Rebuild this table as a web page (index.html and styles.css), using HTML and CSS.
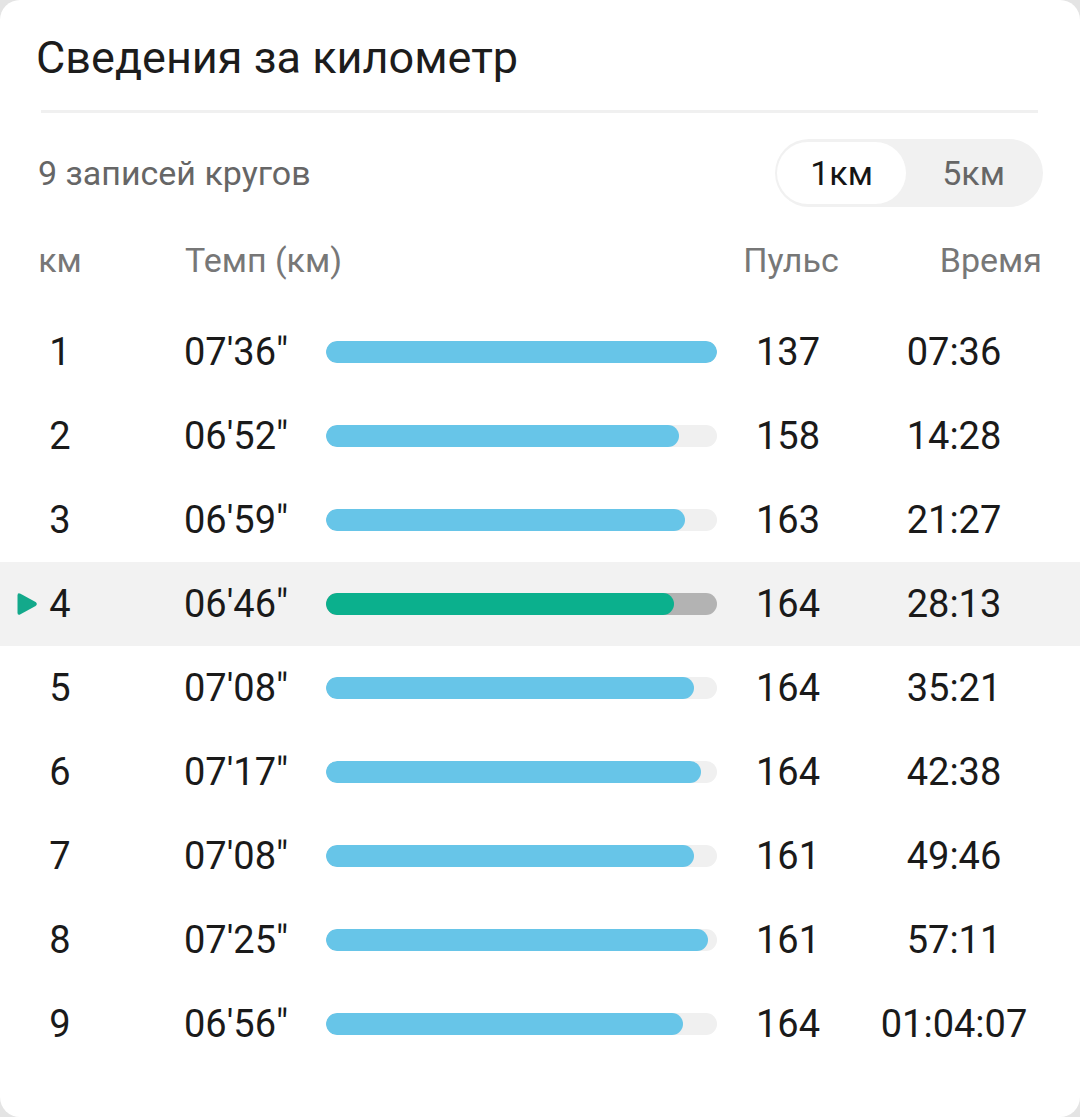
FILE: index.html
```html
<!DOCTYPE html>
<html lang="ru">
<head>
<meta charset="utf-8">
<link rel="stylesheet" href="styles.css">
</head>
<body>
<div class="card">
  <h1 class="title">Сведения за километр</h1>
  <div class="divider"></div>
  <div class="subbar">
    <span class="count">9 записей кругов</span>
    <div class="toggle">
      <span class="opt active">1км</span>
      <span class="opt">5км</span>
    </div>
  </div>
  <div class="row head">
    <span class="c-num">км</span>
    <span class="c-pace">Темп (км)</span>
    <span class="c-bar"></span>
    <span class="c-pulse">Пульс</span>
    <span class="c-time right">Время</span>
  </div>
  <div class="rows">
    <div class="row"><span class="c-num">1</span><span class="c-pace">07'36"</span><span class="c-bar"><span class="track"><span class="fill" style="width:100%"></span></span></span><span class="c-pulse">137</span><span class="c-time">07:36</span></div>
    <div class="row"><span class="c-num">2</span><span class="c-pace">06'52"</span><span class="c-bar"><span class="track"><span class="fill" style="width:90.3%"></span></span></span><span class="c-pulse">158</span><span class="c-time">14:28</span></div>
    <div class="row"><span class="c-num">3</span><span class="c-pace">06'59"</span><span class="c-bar"><span class="track"><span class="fill" style="width:91.8%"></span></span></span><span class="c-pulse">163</span><span class="c-time">21:27</span></div>
    <div class="row current"><svg class="marker" viewBox="0 0 22 24" width="22" height="24"><path d="M1.5 3.5 Q1.5 0.2 4.5 1.8 L19.6 10 Q22 12 19.6 14 L4.5 22.2 Q1.5 23.8 1.5 20.5 Z" fill="#13a98b"/></svg><span class="c-num">4</span><span class="c-pace">06'46"</span><span class="c-bar"><span class="track"><span class="fill" style="width:89%"></span></span></span><span class="c-pulse">164</span><span class="c-time">28:13</span></div>
    <div class="row"><span class="c-num">5</span><span class="c-pace">07'08"</span><span class="c-bar"><span class="track"><span class="fill" style="width:94%"></span></span></span><span class="c-pulse">164</span><span class="c-time">35:21</span></div>
    <div class="row"><span class="c-num">6</span><span class="c-pace">07'17"</span><span class="c-bar"><span class="track"><span class="fill" style="width:96%"></span></span></span><span class="c-pulse">164</span><span class="c-time">42:38</span></div>
    <div class="row"><span class="c-num">7</span><span class="c-pace">07'08"</span><span class="c-bar"><span class="track"><span class="fill" style="width:94%"></span></span></span><span class="c-pulse">161</span><span class="c-time">49:46</span></div>
    <div class="row"><span class="c-num">8</span><span class="c-pace">07'25"</span><span class="c-bar"><span class="track"><span class="fill" style="width:97.7%"></span></span></span><span class="c-pulse">161</span><span class="c-time">57:11</span></div>
    <div class="row"><span class="c-num">9</span><span class="c-pace">06'56"</span><span class="c-bar"><span class="track"><span class="fill" style="width:91.3%"></span></span></span><span class="c-pulse">164</span><span class="c-time">01:04:07</span></div>
  </div>
</div>
</body>
</html>
```
FILE: styles.css
```css
* { box-sizing: border-box; }
html, body {
  margin: 0;
  padding: 0;
  background: #e4e4e4;
}
body {
  font-family: Roboto, "Noto Sans", "Liberation Sans", sans-serif;
  color: #1a1a1a;
}
.card {
  width: 1080px;
  height: 1117px;
  background: #ffffff;
  border-radius: 20px;
  overflow: hidden;
}
.title {
  margin: 0;
  padding: 30px 0 0 36px;
  height: 86px;
  line-height: 56px;
  font-size: 45px;
  font-weight: 400;
  color: #1c1c1c;
}
.divider {
  margin: 24px 42px 0 41px;
  height: 3px;
  background: #f0f0f0;
}
.subbar {
  margin-top: 26px;
  height: 68px;
  display: flex;
  align-items: center;
  justify-content: space-between;
  padding: 0 37px 0 38px;
}
.count {
  font-size: 34px;
  color: #666;
}
.toggle {
  width: 268px;
  height: 68px;
  border-radius: 34px;
  background: #f1f1f1;
  padding: 3px 2px;
  display: flex;
}
.opt {
  width: 130px;
  height: 62px;
  border-radius: 31px;
  display: flex;
  align-items: center;
  justify-content: center;
  font-size: 34px;
  color: #666;
}
.opt + .opt { width: 136px; }
.opt.active {
  background: #fff;
  color: #151515;
}
.row {
  position: relative;
  display: grid;
  grid-template-columns: 120px 206px 391px 142px 190px;
  align-items: center;
  height: 84px;
  font-size: 38px;
  white-space: nowrap;
}
.head {
  margin-top: 11px;
  font-size: 34px;
  color: #777;
}
.rows { margin-top: 8px; }
.current { background: #f2f2f2; }
.c-num { text-align: center; }
.c-pace { padding-left: 64px; }
.head .c-pace { padding-left: 65px; }
.c-pulse { text-align: center; }
.head .c-pulse { padding-left: 6px; }
.c-time { text-align: center; }
.c-time.right { text-align: right; margin-right: 7px; }
.track {
  display: block;
  height: 22px;
  border-radius: 11px;
  background: #f0f0f0;
  overflow: hidden;
}
.fill {
  display: block;
  height: 100%;
  border-radius: 11px;
  background: #67c5e8;
}
.current .track { background: #b3b3b3; }
.current .fill { background: #0bb08d; }
.marker {
  position: absolute;
  left: 16px;
  top: 30px;
}
```
